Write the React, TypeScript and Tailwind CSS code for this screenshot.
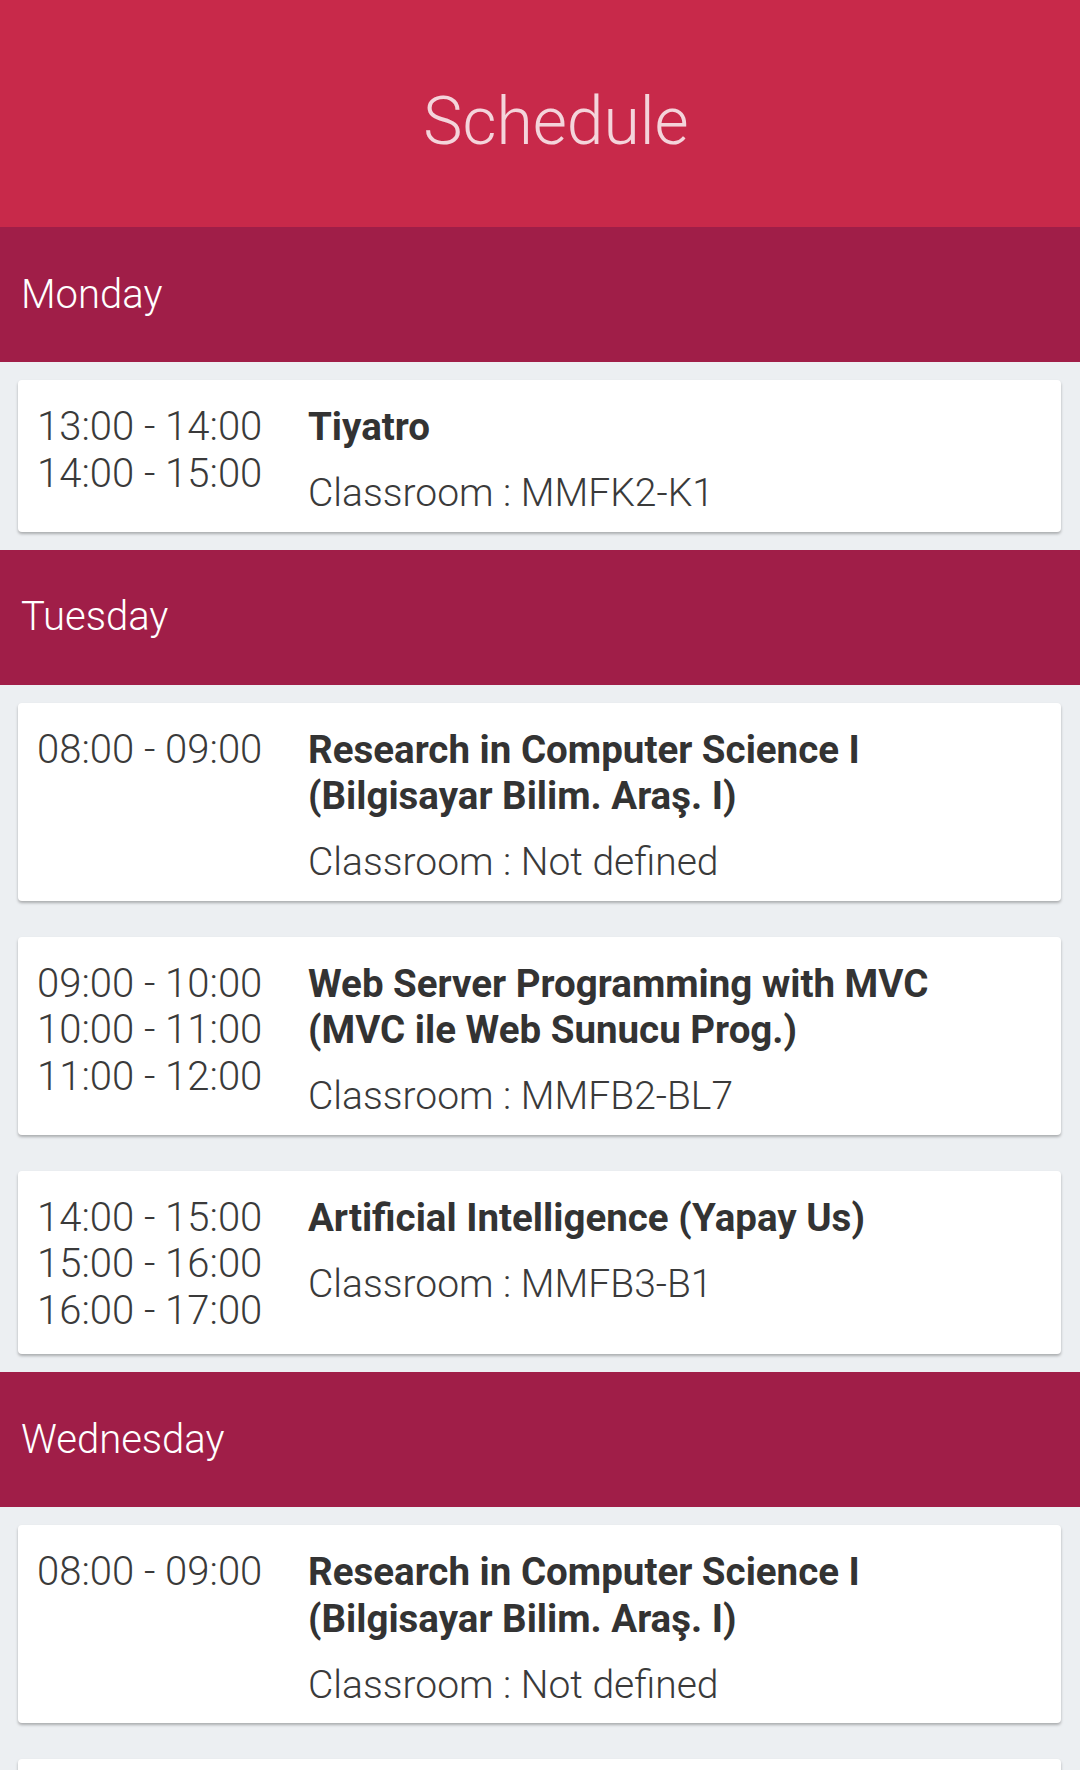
import React from "react";

type Course = { times: string[]; title: string[]; room: string };
type Day = { name: string; courses: Course[] };

const days: Day[] = [
  {
    name: "Monday",
    courses: [
      { times: ["13:00 - 14:00", "14:00 - 15:00"], title: ["Tiyatro"], room: "MMFK2-K1" },
    ],
  },
  {
    name: "Tuesday",
    courses: [
      {
        times: ["08:00 - 09:00"],
        title: ["Research in Computer Science I", "(Bilgisayar Bilim. Araş. I)"],
        room: "Not defined",
      },
      {
        times: ["09:00 - 10:00", "10:00 - 11:00", "11:00 - 12:00"],
        title: ["Web Server Programming with MVC", "(MVC ile Web Sunucu Prog.)"],
        room: "MMFB2-BL7",
      },
      {
        times: ["14:00 - 15:00", "15:00 - 16:00", "16:00 - 17:00"],
        title: ["Artificial Intelligence (Yapay Us)"],
        room: "MMFB3-B1",
      },
    ],
  },
  {
    name: "Wednesday",
    courses: [
      {
        times: ["08:00 - 09:00"],
        title: ["Research in Computer Science I", "(Bilgisayar Bilim. Araş. I)"],
        room: "Not defined",
      },
      {
        times: ["09:00 - 10:00", "10:00 - 11:00", "11:00 - 12:00"],
        title: ["Web Server Programming with MVC", "(MVC ile Web Sunucu Prog.)"],
        room: "MMFB2-BL7",
      },
    ],
  },
];

function CourseCard({ c }: { c: Course }) {
  return (
    <div className="flex flex-row rounded-[4px] bg-white pt-[24px] shadow-[0_2px_3px_rgba(0,0,0,0.28)]">
      <div className="w-[290px] shrink-0 pb-[20px] pl-[19px] text-[40px] font-light leading-[46.5px] text-[#3a3a3a]">
        {c.times.map((t, i) => (
          <div key={i} className="whitespace-nowrap">
            {t}
          </div>
        ))}
      </div>
      <div className="flex flex-col pb-[15px]">
        <div className="text-[38.5px] font-bold leading-[46.5px] text-[#333333]">
          {c.title.map((t, i) => (
            <div key={i} className="whitespace-nowrap">
              {t}
            </div>
          ))}
        </div>
        <div className="mt-[19.5px] whitespace-nowrap text-[39px] font-light leading-[46.5px] text-[#3a3a3a]">
          Classroom : {c.room}
        </div>
      </div>
    </div>
  );
}

export default function App() {
  return (
    <div
      className="min-h-[1770px] w-[1080px] bg-[#eceff2]"
      style={{ fontFamily: "Roboto, 'Noto Sans', sans-serif" }}
    >
      <div className="flex h-[227px] items-center justify-center bg-[#c8294a] pl-[32px] pt-[15px]">
        <span className="text-[66px] font-light text-white/80">Schedule</span>
      </div>
      {days.map((d) => (
        <div key={d.name}>
          <div className="flex h-[135px] items-center bg-[#a01e48] pl-[21px]">
            <span className="text-[40px] font-light text-white">{d.name}</span>
          </div>
          <div className="flex flex-col gap-[36px] py-[18px] pl-[18px] pr-[19px]">
            {d.courses.map((c, i) => (
              <CourseCard key={i} c={c} />
            ))}
          </div>
        </div>
      ))}
    </div>
  );
}
